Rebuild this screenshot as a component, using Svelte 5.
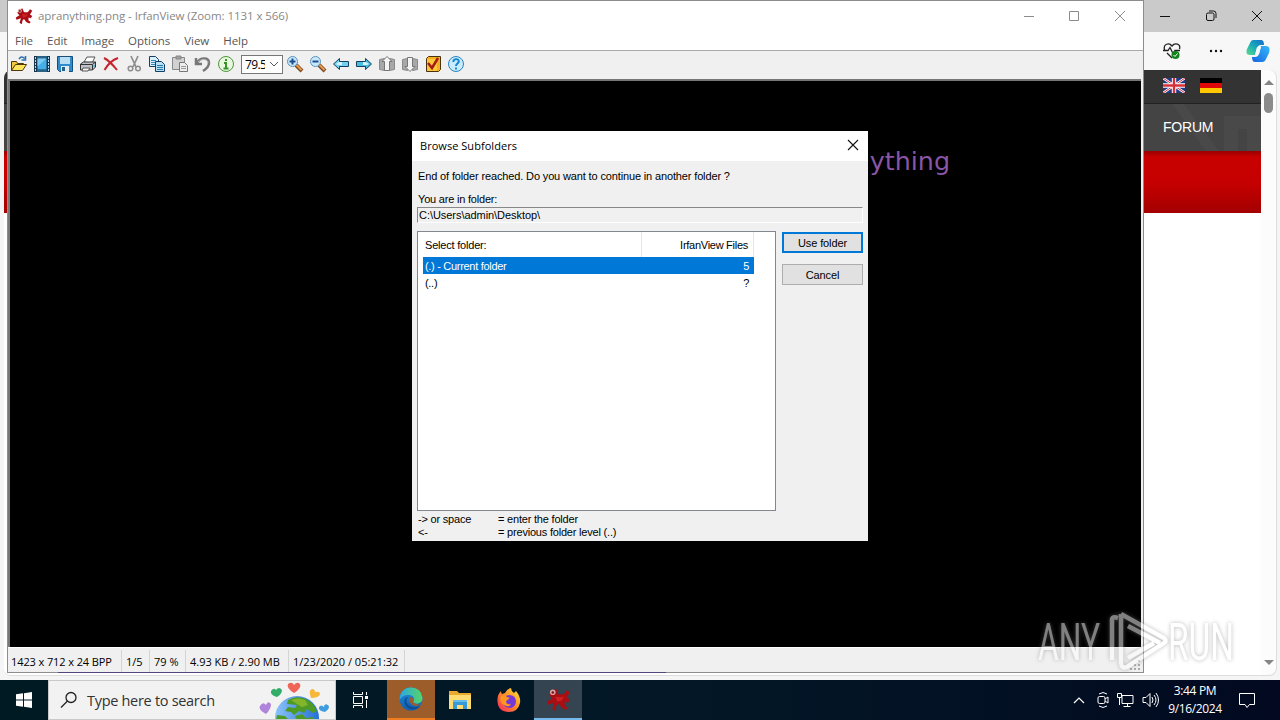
<script>
  const menu = ["File", "Edit", "Image", "Options", "View", "Help"];
  const toolsLeft = ["open", "slides", "save", "print", "delete", "cut", "copy", "paste", "undo", "info"];
  const toolsRight = ["zoomin", "zoomout", "prev", "next", "up", "down", "props", "help"];
  const status = [
    { text: "1423 x 712 x 24 BPP", cls: "s1" },
    { text: "1/5", cls: "s2" },
    { text: "79 %", cls: "s3" },
    { text: "4.93 KB / 2.90 MB", cls: "s4" },
    { text: "1/23/2020 / 05:21:32", cls: "s5" },
  ];
  const folders = [
    { name: "(.) - Current folder", files: "5" },
    { name: "(..)", files: "?" },
  ];
  let selected = $state(0);
  let zoom = $state("79.5");
</script>

{#snippet splat()}
  <svg class="splat" viewBox="0 0 24 24">
    <path d="M6 3 10 2 12 7 17 7 20 3 23 5 20 10 23 12 21 15 18 14 18 18 21 20 19 22 15 20 12 16 10 18 9 23 6 21 8 15 2 17 1 14 6 11 3 8Z" fill="#a80e14" />
    <path d="M9 9 14 10 17 9 15 13 11 14Z" fill="#d02222" />
    <circle cx="6.5" cy="5" r="2.7" fill="#d9a3a3" />
    <circle cx="6.5" cy="5.2" r="1.2" fill="#6c1416" />
  </svg>
{/snippet}

{#snippet tool(name)}
  <svg class="tool" width="18" height="18" viewBox="0 0 18 18" fill="none">
    {#if name === "open"}
      <path d="M1.5 15.5v-9h5l1 2h6v2" fill="#f3c742" stroke="#4c3a0c" />
      <path d="m1.5 15.5 4-6h11l-4 6z" fill="#ffe45e" stroke="#4c3a0c" />
      <path d="M9 4c2-3 4-2 5.5-.5M15.5 1v4h-4" stroke="#2b6fae" stroke-width="1.5" />
    {:else if name === "slides"}
      <path d="M1 1h16v16H1z" fill="#17364e" />
      <path d="M4.500 3.500h9v11h-9z" fill="#45aee8" />
      <path d="M4.500 3.500h9l-9 8z" fill="#7fcaf2" />
      <path d="M2.500 2v15M15.500 2v15" stroke="#b5dcf4" stroke-dasharray="2 1" />
      <path d="M4 2h10M4 16h10" stroke="#3d8dbd" />
    {:else if name === "save"}
      <path d="M1.500 1.500h15v15h-13l-2-2z" fill="#2f8ccc" stroke="#164e7c" />
      <path d="M4 2h10v7H4z" fill="#b9def2" />
      <path d="M5 11h8v6H5z" fill="#e5edf2" />
      <path d="M6 12h3v4H6z" fill="#285f87" />
    {:else if name === "print"}
      <path d="m5 7 3-5h8l-3 6z" fill="#fff" stroke="#555" />
      <path d="m1.500 9 3-2h12v5l-3 3h-12z" fill="#bfc3c8" stroke="#333" />
      <path d="M1.500 9.500h12l3-2.500M13.500 10v5" stroke="#333" />
      <path d="m4 13 7 0-2 3H3z" fill="#f4f4f4" stroke="#555" />
      <path d="M14.500 11h1.500" stroke="#32a4d7" stroke-width="1.5" />
    {:else if name === "delete"}
      <path d="M2 3c4 2 9 7 13 12M16 3C10 5 6 9 2.500 15" stroke="#c4252c" stroke-width="2" />
    {:else if name === "cut"}
      <path d="m6 1 5 11M13 1 8 12" stroke="#8d8d8d" stroke-width="1.7" />
      <circle cx="5.500" cy="13.500" r="2.300" stroke="#8d8d8d" stroke-width="1.5" />
      <circle cx="13" cy="13.500" r="2.300" stroke="#8d8d8d" stroke-width="1.5" />
    {:else if name === "copy"}
      <path d="M1.500 1.500h6l3 3v7h-9z" fill="#d9effb" stroke="#173f63" />
      <path d="M3 5.500h5M3 7.500h5M3 9.500h5" stroke="#3388bb" />
      <path d="M7.500 6.500h6l3 3v7h-9z" fill="#b7e0f5" stroke="#173f63" />
      <path d="M9 10.500h6M9 12.500h6M9 14.500h6" stroke="#2479aa" />
    {:else if name === "paste"}
      <path d="M1.500 2.500h12v12h-12z" fill="#d1d1d1" stroke="#888" />
      <path d="M5 1h5v3H5z" fill="#a0a0a0" stroke="#888" />
      <path d="M8.500 7.500h5l3 3v6h-8z" fill="#ededed" stroke="#777" />
      <path d="M10 11.500h5M10 13.500h5" stroke="#999" />
    {:else if name === "undo"}
      <path d="M2 3v6h6M3 8c3-6 12-6 12 0 0 4-3 6-6 8" stroke="#777" stroke-width="2.5" />
      <path d="M4 7c4-4 10-3 10 1" stroke="#bbb" />
    {:else if name === "info"}
      <circle cx="9" cy="9" r="7.500" fill="#e9f7e1" stroke="#4d963a" />
      <path d="M9 4v2M7 8h2v5M6.500 13.500h5" stroke="#35942a" stroke-width="2" />
    {:else if name === "zoomin" || name === "zoomout"}
      <path d="m10 10 6 6" stroke="#7c4921" stroke-width="4" />
      <path d="m10.500 10 5 5" stroke="#e79b4e" stroke-width="2" />
      <circle cx="6.500" cy="6.500" r="5" fill="#c9e8fa" stroke="#5a94bd" />
      <path d="M3.500 6.500h6" stroke="#1a4e91" stroke-width="2" />
      {#if name === "zoomin"}<path d="M6.500 3.500v6" stroke="#1a4e91" stroke-width="2" />{/if}
    {:else if name === "prev"}
      <path d="m1.500 9 6-5.500v3h9v5h-9v3z" fill="#73d0ef" stroke="#173f5c" />
      <path d="m4 9 3-2h3v3H6z" fill="#d5f3fd" />
    {:else if name === "next"}
      <path d="m16.500 9-6-5.500v3h-9v5h9v3z" fill="#48bddf" stroke="#173f5c" />
      <path d="m14 9-3-2H8v3h4z" fill="#d5f3fd" />
    {:else if name === "up" || name === "down"}
      <path d="m1.500 4.500 5-1v12l-5-1zM16.500 4.500l-5-1v12l5-1z" fill="#a8a8a8" stroke="#8a8a8a" />
      {#if name === "up"}
        <path d="m9 1.500 5 5h-2.500v9h-5v-9H4z" fill="#f4f4f4" stroke="#777" />
      {:else}
        <path d="m9 16.500-5-5h2.500v-9h5v9H14z" fill="#f4f4f4" stroke="#777" />
      {/if}
    {:else if name === "props"}
      <path d="m2.500 3.500 2-2h12v13l-2 2h-12z" fill="#f5af21" stroke="#49330e" />
      <path d="M3 4h10v12H3z" fill="#ffc83c" />
      <path d="m4 8 4 5 6-10" stroke="#a51d12" stroke-width="2.5" />
    {:else}
      <circle cx="9" cy="9" r="7.500" fill="#c8ebff" stroke="#2b84bd" />
      <path d="M6.300 7c0-4 6-3.500 5.500-.5C11.500 8.500 9 8.500 9 11M9 12.500v2" stroke="#1685cc" stroke-width="1.9" />
    {/if}
  </svg>
{/snippet}

<div class="desktop">
  <div class="browser">
    <div class="browser-title">
      <svg width="120" height="30" viewBox="0 0 120 30" fill="none" stroke="#111">
        <path d="M5 16.500h10M97 11l10 10M107 11 97 21" />
        <rect x="51.500" y="13" width="7.500" height="7.500" rx="1.500" />
        <path d="M54 11h4.500a2.500 2.500 0 0 1 2.500 2.500V18" />
      </svg>
    </div>
    <div class="browser-bar">
      <svg width="20" height="20" viewBox="0 0 20 20" fill="none">
        <path d="m10 17-5-5M2.500 9C1 3 7 1 10 5c3-4 9-2 7.500 3M1 9.500h5l2-3 3 6 2-3h5" stroke="#222" stroke-width="1.3" />
        <circle cx="13.500" cy="14" r="4" fill="#13831b" />
        <path d="m11.500 14 1.500 1.500 2.500-3" stroke="#fff" />
      </svg>
      <svg class="dots" width="14" height="4" viewBox="0 0 14 4">
        <circle cx="2" cy="2" r="1.200" /><circle cx="7" cy="2" r="1.200" /><circle cx="12" cy="2" r="1.200" />
      </svg>
      <svg width="24" height="24" viewBox="0 0 24 24">
        <defs>
          <linearGradient id="cpA" x1="0" y1="1" x2="1" y2="0"><stop stop-color="#5ddc8c" /><stop offset=".5" stop-color="#17a9b8" /><stop offset="1" stop-color="#1769cf" /></linearGradient>
          <linearGradient id="cpB" x1="0" y1="1" x2="1" y2="0"><stop stop-color="#1666df" /><stop offset="1" stop-color="#36b8fa" /></linearGradient>
        </defs>
        <path d="M7 1h8q3 0 3 5h-3q-3 0-4 3l-2 7H4q-5 0-3-6L4 4q1-3 3-3Z" fill="url(#cpA)" />
        <path d="M17 23H9q-3 0-3-5h3q3 0 4-3l2-8h5q5 0 3 7l-3 6q-1 3-3 3Z" fill="url(#cpB)" />
        <path d="M11 8h4l-2 7-4 1Z" fill="#f5fbff" />
      </svg>
    </div>
    <div class="browser-body">
      <div class="page">
        <div class="page-top">
          <svg width="22" height="15" viewBox="0 0 22 15">
            <path d="M0 0h22v15H0z" fill="#233a86" />
            <path d="m0 0 22 15M22 0 0 15" stroke="#fff" stroke-width="2.4" />
            <path d="m0 0 22 15M22 0 0 15" stroke="#d8303a" />
            <path d="M11 0v15M0 7.500h22" stroke="#fff" stroke-width="4.4" />
            <path d="M11 0v15M0 7.500h22" stroke="#d8303a" stroke-width="2.4" />
          </svg>
          <svg width="22" height="15" viewBox="0 0 22 15">
            <path d="M0 0h22v5H0z" /><path d="M0 5h22v5H0z" fill="#e00808" /><path d="M0 10h22v5H0z" fill="#ffc800" />
          </svg>
        </div>
        <div class="page-nav">
          <svg width="117" height="47" viewBox="0 0 117 47">
            <path d="M28 0h12l35 47H62zM80 12h37v35h-14V25H94v22H80z" fill="#494949" />
          </svg>
          <span>FORUM</span>
        </div>
        <div class="page-hero"></div>
      </div>
      <div class="scrollbar">
        <i class="arrow"></i>
        <div class="thumb"></div>
        <i class="arrow last"></i>
      </div>
    </div>
  </div>
  <div class="link-line"></div>

  <div class="viewer">
    <div class="title">
      {@render splat()}
      <span>apranything.png - IrfanView (Zoom: 1131 x 566)</span>
      <svg class="caption" width="110" height="30" viewBox="0 0 110 30" fill="none" stroke="#8c8c8c">
        <path d="M4 15.500h10M95 10l10 10M105 10 95 20" />
        <path d="M49.500 10.500h9v9h-9z" />
      </svg>
    </div>
    <div class="menu">
      {#each menu as item}<span>{item}</span>{/each}
    </div>
    <div class="toolbar">
      {#each toolsLeft as name}{@render tool(name)}{/each}
      <div class="combo">
        <span>{zoom}</span>
        <svg width="10" height="6" viewBox="0 0 10 6" fill="none" stroke="#555"><path d="m1 1 4 4 4-4" /></svg>
      </div>
      {#each toolsRight as name}{@render tool(name)}{/each}
    </div>
    <div class="canvas"><span>apranything</span></div>
    <div class="status">
      {#each status as cell}<div class={cell.cls}><span>{cell.text}</span></div>{/each}
      <svg class="grip" width="12" height="12" viewBox="0 0 12 12" stroke="#aaa" stroke-width="2" stroke-dasharray="2 2">
        <path d="M9 1v10M5 5v6M1 9v2" />
      </svg>
    </div>
  </div>

  <div class="dialog">
    <div class="dialog-title">
      <span>Browse Subfolders</span>
      <svg width="12" height="12" viewBox="0 0 12 12" stroke="#111" stroke-width="1.1"><path d="m1 1 10 10M11 1 1 11" /></svg>
    </div>
    <div class="dialog-body">
      <p class="ask">End of folder reached. Do you want to continue in another folder ?</p>
      <p class="where">You are in folder:</p>
      <div class="path"><span>C:\Users\admin\Desktop\</span></div>
      <div class="columns">
        <div class="list">
          <div class="head"><span>Select folder:</span><span>IrfanView Files</span></div>
          {#each folders as row, i}
            <!-- svelte-ignore a11y_click_events_have_key_events, a11y_no_static_element_interactions -->
            <div class="row" class:selected={selected === i} onclick={() => (selected = i)}>
              <span>{row.name}</span><span>{row.files}</span>
            </div>
          {/each}
        </div>
        <div class="buttons">
          <button class="default">Use folder</button>
          <button>Cancel</button>
        </div>
      </div>
      <div class="hints">
        <span>-&gt; or space</span><span>= enter the folder</span>
        <span>&lt;-</span><span>= previous folder level (..)</span>
      </div>
    </div>
  </div>

  <div class="taskbar">
    <div class="start">
      <svg width="16" height="16" viewBox="0 0 16 16" fill="#fff"><path d="m0 2.300 7-1v6.200H0zM8 1.200 16 0v7.500H8zM0 8.500h7v6.200l-7-1zM8 8.500h8V16l-8-1.200z" /></svg>
    </div>
    <div class="search">
      <svg width="18" height="18" viewBox="0 0 18 18" fill="none" stroke="#222" stroke-width="1.3"><circle cx="11" cy="6.500" r="5" /><path d="m7.500 10-6.500 6.500" /></svg>
      <span>Type here to search</span>
      <svg class="globe" width="72" height="38" viewBox="0 1 72 38">
        <defs><linearGradient id="sea"><stop stop-color="#8cc3fa" /><stop offset="1" stop-color="#2671d6" /></linearGradient></defs>
        <circle cx="38" cy="38" r="22" fill="url(#sea)" />
        <path d="M29 20q8-5 18-1 7 3 11 12l-4 2-6-4-3 4-5-2-5 4-3-3-6-1 3-4 7 1 2-3-10-1zM36 36l7-2 4 4 8-1v3H38zM18 35l8 1 4 4H17z" fill="#4e9a27" />
        <path d="M32 20q7-3 14 0l3 5-6 2-5-3z" fill="#83b52b" />
        <path d="M7 34Q-1 30 1 26q3-5 6-1 2-5 5-1 0 5-5 10Z" fill="#b184db" />
        <path d="M18 17q-7-2-6-6 3-4 5-1 3-4 6 0 0 4-5 7Z" fill="#32ae68" />
        <path d="M35 13q-8-5-6-9 4-3 6 1 3-4 6-1 2 4-6 9Z" fill="#ef6656" />
        <path d="M52 18q-3-8 1-9 3 0 3 3 5-1 5 2-1 4-9 4Z" fill="#f6b83b" />
        <path d="M66 32q-7-1-6-5 2-3 5 0 0-4 4-2 3 3-3 7Z" fill="#3f9cdf" />
      </svg>
    </div>
    <div class="task">
      <svg width="17" height="18" viewBox="0 0 17 18" fill="none" stroke="#fff"><path d="M1.500 1v2.500h9V1M1.500 17v-2.500h9V17M1.500 5.500h9v7h-9zM14.500 1v3M14.500 9v8" /><path d="M13 5h3v3h-3z" fill="#fff" stroke="none" /></svg>
    </div>
    <div class="task edge">
      <svg width="24" height="24" viewBox="0 0 24 24">
        <defs>
          <linearGradient id="edTop"><stop stop-color="#2ba7e5" /><stop offset="1" stop-color="#55d665" /></linearGradient>
          <linearGradient id="edLow" x1="0" y1="0" x2="0" y2="1"><stop stop-color="#1e90dd" /><stop offset="1" stop-color="#145daf" /></linearGradient>
        </defs>
        <circle cx="12" cy="12" r="11.500" fill="url(#edLow)" />
        <path d="M.7 10Q3 .5 12 .5 22 .5 23.500 11c0 6-7 7-9.500 4 2-3 1-7-4-7-4 0-7 1-9.300 5Z" fill="url(#edTop)" />
        <path d="M9 10c-5 6 2 13 12 9l-2 2c-8 4-16-3-13-9q1-2 3-2Z" fill="#104d91" />
        <path d="M11 10c3 0 4 3 3 5 3 3 6 3 8 2l-1 1c-6 3-13-2-10-8Z" fill="#9d5d2b" />
      </svg>
    </div>
    <div class="task">
      <svg width="22" height="20" viewBox="0 0 22 20"><path d="M0 1h8l2 2h12v16H0z" fill="#e9a92e" /><path d="M0 5h22v14H0z" fill="#ffdc72" /><path d="M4 10h14v9h-4v-4H8v4H4z" fill="#3899d8" /><path d="M4 10h14v2H4z" fill="#68bae9" /></svg>
    </div>
    <div class="task">
      <svg width="24" height="24" viewBox="0 0 24 24">
        <defs><linearGradient id="fox" x1="1" y1="0" x2="0" y2="1"><stop stop-color="#ffe43d" /><stop offset=".5" stop-color="#ff8a24" /><stop offset="1" stop-color="#f51e68" /></linearGradient></defs>
        <path d="M4 3q0 2 1 3l3-1Q10 1 14 0q0 3 3 5l2-2q5 6 4 12-2 9-11 9Q1 24 .500 13 0 7 4 3Z" fill="url(#fox)" />
        <path d="M12 7q7 0 7 7-1 6-7 6-6-1-6-6l4-1-3-3q2-3 5-3Z" fill="#7538d5" />
        <path d="M4 8q4-2 6 1l3 1-4 3q0 4 5 3-2 4-7 1Q2 14 4 8Z" fill="#ff981f" />
      </svg>
    </div>
    <div class="task viewer-task">{@render splat()}</div>
    <div class="tray">
      <svg width="12" height="8" viewBox="0 0 12 8" fill="none" stroke="#fff" stroke-width="1.2"><path d="m1 7 5-5 5 5" /></svg>
      <svg width="12" height="18" viewBox="0 0 12 18" fill="none" stroke="#fff"><rect x="1" y="5.500" width="7" height="7" rx="1.500" /><path d="m8 8 3-2v6l-3-2M2 3q4-3 8 0M2 15q4 3 8 0" /></svg>
      <svg width="17" height="16" viewBox="0 0 17 16" fill="none" stroke="#fff"><path d="M5 3.500h11v8H5zM6.500 14.500h7M10.500 12v2M2.500 5v8" /><path d="M.500 1.500h4v4h-4z" fill="#061420" /></svg>
      <svg width="17" height="16" viewBox="0 0 17 16" fill="none" stroke="#fff"><path d="M1 5.500h3l4-4v13l-4-4H1zM10 5q2 3 0 6M12 3q4 5 0 10M14 1q5 7 0 14" /></svg>
      <div class="clock"><span>3:44 PM</span><span>9/16/2024</span></div>
      <svg width="17" height="17" viewBox="0 0 17 17" fill="none" stroke="#fff"><path d="M.500 1.500h15v11h-5L8 15.500 6 12.500H.500z" /></svg>
    </div>
  </div>

  <svg class="watermark" width="230" height="76" viewBox="0 0 230 76">
    <text x="8" y="55" textLength="62" lengthAdjust="spacingAndGlyphs">ANY</text>
    <text x="138" y="55" textLength="66" lengthAdjust="spacingAndGlyphs">RUN</text>
    <path d="M82 55V15q0-4 6-2M91 9v50M91 9l43 24q3 3 0 5L97 62q-5 2-6-3M98 21l32 17M98 53l26-15" />
  </svg>
</div>

<style>
  :global(body) {
    margin: 0;
    overflow: hidden;
  }
  .desktop {
    position: relative;
    width: 1280px;
    height: 720px;
    overflow: hidden;
    background: #f7f7f7;
    font-family: "Open Sans", "Noto Sans", sans-serif;
    font-size: 11px;
    color: #000;
  }
  .desktop * {
    box-sizing: border-box;
  }
  span {
    white-space: nowrap;
  }
  svg {
    display: block;
    flex: none;
  }

  /* browser behind the viewer */
  .browser {
    position: absolute;
    inset: 0 0 40px;
    display: flex;
    flex-direction: column;
    background: #f5f5f5;
  }
  .browser-title {
    height: 32px;
    flex: none;
    background: #cacaca;
    display: flex;
    justify-content: flex-end;
    padding-right: 5px;
  }
  .browser-bar {
    height: 38px;
    flex: none;
    background: #f7f7f7;
    display: flex;
    align-items: center;
    justify-content: flex-end;
    padding-right: 10px;
  }
  .dots {
    margin: 0 23px 0 27px;
    fill: #111;
  }
  .browser-body {
    height: 606px;
    margin: 0 3px 0 4px;
    display: flex;
    background: #fcfcfc;
    border: solid #ddd;
    border-width: 0 1px 1px 0;
    border-radius: 8px;
    overflow: hidden;
  }
  .page {
    flex: 1;
    background: #fff;
  }
  .page-top {
    height: 34px;
    background: #333;
    border-bottom: 1px solid #222;
    display: flex;
    gap: 15px;
    padding: 8px 39px 0 0;
    justify-content: flex-end;
  }
  .page-nav {
    height: 47px;
    background: #444;
    display: grid;
    justify-content: end;
    font: 14px "Liberation Sans", sans-serif;
    color: #fff;
  }
  .page-nav > * {
    grid-area: 1 / 1;
  }
  .page-nav span {
    padding: 15px 0 0 19px;
    letter-spacing: -0.2px;
  }
  .page-hero {
    height: 62px;
    background: linear-gradient(#900, #c80000 6px, #c60000 50%, #a40000);
  }
  .scrollbar {
    width: 15px;
    display: flex;
    flex-direction: column;
    align-items: center;
    padding: 10px 0 10px;
  }
  .arrow {
    border: solid transparent;
    border-width: 0 5px 5px;
    border-bottom-color: #858585;
  }
  .arrow.last {
    margin-top: auto;
    transform: rotate(180deg);
  }
  .thumb {
    width: 9px;
    height: 20px;
    margin-top: 8px;
    border-radius: 5px;
    background: #8b8b8b;
  }
  .link-line {
    position: absolute;
    left: 58px;
    top: 672px;
    width: 608px;
    height: 1px;
    background: #54477d;
    z-index: 1;
  }

  /* viewer window */
  .viewer {
    position: absolute;
    left: 7px;
    top: 0;
    width: 1137px;
    height: 673px;
    border: 1px solid #8d8d8d;
    background: #f0f0f0;
    display: flex;
    flex-direction: column;
  }
  .title {
    height: 29px;
    flex: none;
    background: #fff;
    display: flex;
    align-items: center;
    padding-left: 7px;
    gap: 5px;
    color: #888;
    font-size: 11.5px;
    letter-spacing: -0.06px;
  }
  .splat {
    width: 18px;
    height: 18px;
  }
  .caption {
    margin-left: auto;
    margin-right: 13px;
  }
  .menu {
    height: 21px;
    flex: none;
    background: #fff;
    border-bottom: 1px solid #aaa;
    display: flex;
    align-items: center;
    gap: 14px;
    padding-left: 7px;
    color: #555;
    font-size: 11.5px;
    letter-spacing: -0.04px;
  }
  .toolbar {
    height: 28px;
    flex: none;
    display: flex;
    align-items: center;
    padding: 0 0 2px 2px;
    gap: 5px;
  }
  .combo {
    width: 42px;
    height: 19px;
    border: 1px solid #777;
    background: #fff;
    display: flex;
    align-items: center;
    justify-content: space-between;
    margin: 0 -2px 0 1px;
    padding: 0 3px;
    font-size: 12px;
  }
  .combo span {
    width: 20px;
    overflow: hidden;
    letter-spacing: -0.6px;
  }
  .canvas {
    height: 568px;
    flex: none;
    margin-right: 2px;
    border: solid #777;
    border-width: 2px 0 0 2px;
    background: #000;
    font: 25.4px "DejaVu Sans", sans-serif;
    color: #8856a7;
    display: flex;
    justify-content: flex-end;
    padding: 65px 191px 0 0;
  }
  .status {
    flex: 1;
    display: flex;
    border-top: 1px solid #fff;
    padding-top: 2px;
  }
  .status > div {
    border-right: 1px solid #d4d4d4;
    padding: 4px 0 0 4px;
    flex: none;
  }
  .status .s1 {
    width: 114px;
    padding-left: 3px;
    letter-spacing: -0.1px;
  }
  .status .s2 {
    width: 28px;
  }
  .status .s3 {
    width: 36px;
  }
  .status .s4 {
    width: 103px;
  }
  .status .s5 {
    width: 116px;
  }
  .grip {
    margin: auto 1px 1px auto;
  }

  /* folder dialog */
  .dialog {
    position: absolute;
    left: 412px;
    top: 131px;
    width: 456px;
    height: 410px;
    background: #f0f0f0;
    font: 11px/13px "Liberation Sans", sans-serif;
  }
  .dialog-title {
    height: 30px;
    background: #fff;
    display: flex;
    align-items: center;
    justify-content: space-between;
    padding: 0 9px 2px 8px;
    font-family: "Open Sans", sans-serif;
    letter-spacing: 0.04px;
  }
  .dialog-body {
    padding: 9px 5px 0;
    letter-spacing: -0.2px;
  }
  p {
    margin: 0 0 10px 1px;
  }
  .where {
    margin-bottom: 1px;
  }
  .ask {
    letter-spacing: -0.14px;
  }
  .path {
    height: 16px;
    border: 1px solid #888;
    border-right-color: #fff;
    border-bottom-color: #fff;
    padding: 1px 0 0 1px;
    letter-spacing: -0.05px;
  }
  .columns {
    display: flex;
    gap: 6px;
    margin-top: 8px;
  }
  .list {
    width: 359px;
    height: 280px;
    border: 1px solid #828790;
    background: #fff;
    padding-right: 21px;
  }
  .head {
    height: 25px;
    display: flex;
  }
  .head span {
    padding: 7px 5px 0 7px;
    border-right: 1px solid #e5e5e5;
  }
  .head span:first-child {
    width: 224px;
  }
  .head span:last-child {
    flex: 1;
    text-align: right;
    letter-spacing: -0.27px;
  }
  .row {
    height: 17px;
    margin-left: 5px;
    display: flex;
    justify-content: space-between;
    padding: 3px 5px 0 2px;
    letter-spacing: -0.3px;
  }
  .row.selected {
    background: #0078d7;
    color: #fff;
  }
  .buttons {
    width: 81px;
    display: flex;
    flex-direction: column;
    gap: 11px;
    padding-top: 1px;
  }
  button {
    height: 21px;
    padding: 2px 0 0;
    border: 1px solid #adadad;
    background: #e1e1e1;
    font: inherit;
    letter-spacing: -0.1px;
    color: #000;
  }
  .default {
    border: 2px solid #0078d7;
  }
  .hints {
    display: grid;
    grid-template-columns: 80px 1fr;
    padding: 2px 0 0 1px;
  }

  /* taskbar */
  .taskbar {
    position: absolute;
    inset: 680px 0 0;
    display: flex;
    background: linear-gradient(90deg, #001a24, #031626 60%, #020920);
  }
  .start,
  .task {
    width: 48px;
    display: flex;
    align-items: center;
    justify-content: center;
  }
  .start {
    background: #001a24;
  }
  .search {
    width: 288px;
    background: #f2f2f2;
    border: 1px solid #c9c9c9;
    display: flex;
    align-items: center;
    padding-left: 11px;
    gap: 9px;
    font-size: 14.5px;
    letter-spacing: -0.3px;
    color: #333;
  }
  .globe {
    margin: 0 4px 0 auto;
  }
  .task {
    width: 49px;
  }
  .edge {
    width: 48px;
    margin-left: 2px;
    background: #9d5d2b;
    border-bottom: 2px solid #f07c20;
  }
  .viewer-task {
    width: 48px;
    margin-left: 1px;
    background: #344551;
    border-bottom: 2px solid #76b9ed;
  }
  .viewer-task .splat {
    width: 25px;
    height: 25px;
  }
  .tray {
    margin-left: auto;
    display: flex;
    align-items: center;
    gap: 8px;
    padding-right: 24px;
  }
  .tray > svg:first-child {
    margin-right: 4px;
  }
  .clock {
    width: 54px;
    display: flex;
    flex-direction: column;
    align-items: center;
    color: #fff;
    font-size: 12px;
    letter-spacing: -0.35px;
    line-height: 18px;
    margin: 0 9px 0 1px;
  }

  .watermark {
    position: absolute;
    left: 1030px;
    top: 605px;
    opacity: 0.5;
    font: 400 51px Roboto, sans-serif;
    fill: #fff;
    filter: drop-shadow(0 0 2px #777);
  }
  .watermark path {
    fill: none;
    stroke: #fff;
    stroke-width: 4.5px;
  }
</style>
